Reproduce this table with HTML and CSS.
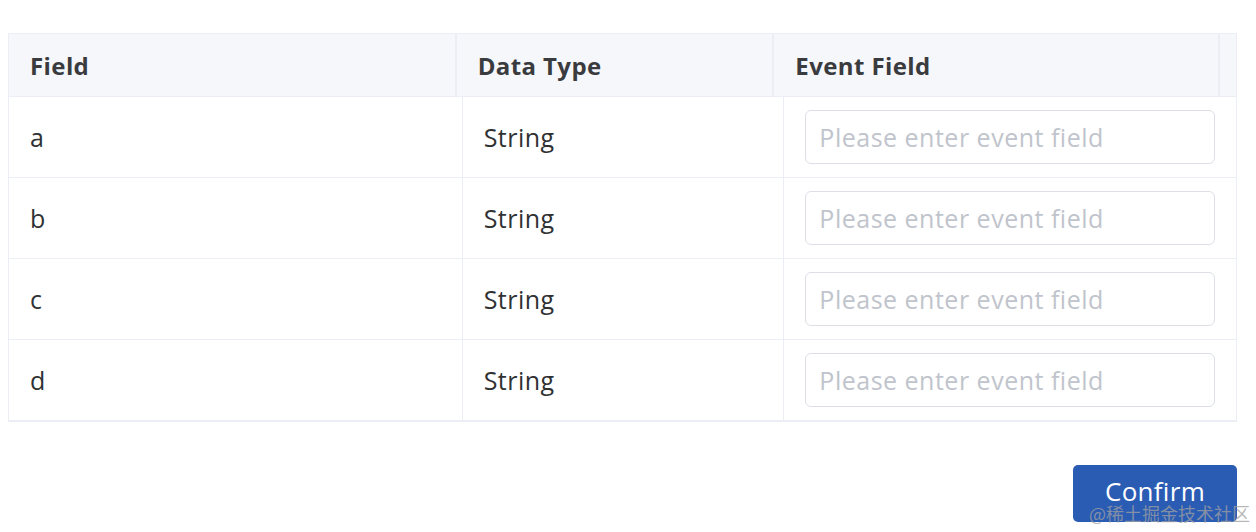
FILE: index.html
```html
<!DOCTYPE html>
<html lang="en">
<head>
<meta charset="utf-8">
<title>Field mapping</title>
<link rel="stylesheet" href="styles.css">
</head>
<body>
<div class="page">
  <div class="table">
    <div class="thead">
      <div class="th">Field</div>
      <div class="th">Data Type</div>
      <div class="th">Event Field</div>
      <div class="th gutter"></div>
    </div>
    <div class="tbody">
      <div class="tr">
        <div class="td">a</div>
        <div class="td">String</div>
        <div class="td"><input class="input" type="text" placeholder="Please enter event field"></div>
      </div>
      <div class="tr">
        <div class="td">b</div>
        <div class="td">String</div>
        <div class="td"><input class="input" type="text" placeholder="Please enter event field"></div>
      </div>
      <div class="tr">
        <div class="td">c</div>
        <div class="td">String</div>
        <div class="td"><input class="input" type="text" placeholder="Please enter event field"></div>
      </div>
      <div class="tr">
        <div class="td">d</div>
        <div class="td">String</div>
        <div class="td"><input class="input" type="text" placeholder="Please enter event field"></div>
      </div>
    </div>
  </div>
  <div class="footer">
    <button class="btn" type="button">Confirm</button>
  </div>
</div>
<div class="watermark">@稀土掘金技术社区</div>
</body>
</html>
```

FILE: styles.css
```css
html, body {
  margin: 0;
  padding: 0;
  background: #ffffff;
}

body {
  font-family: "Open Sans", "Noto Sans CJK SC", sans-serif;
  color: #303133;
  width: 1256px;
  height: 532px;
  overflow: hidden;
  position: relative;
}

.page {
  padding: 33px 19px 0 8px;
}

.table {
  border: 1px solid #ebeef5;
  border-right: none;
}

.thead {
  display: grid;
  grid-template-columns: 448fr 318fr 446fr 17px;
  background: #f5f7fa;
  height: 62px;
  border-bottom: 1px solid #ebeef5;
}

.th {
  display: flex;
  align-items: center;
  padding-left: 21px;
  font-weight: 700;
  font-size: 24px;
  letter-spacing: 0.4px;
  color: #3a3b3e;
  border-right: 2px solid #ebeef5;
}

.th.gutter {
  padding: 0;
  border-right: 1px solid #ebeef5;
}

.tr {
  display: grid;
  grid-template-columns: 454fr 322fr 453fr;
  height: 81px;
  border-bottom: 1px solid #ebeef5;
  box-sizing: border-box;
}

.td {
  display: flex;
  align-items: center;
  padding: 0 21px;
  font-size: 25px;
  letter-spacing: 0.5px;
  color: #303133;
  border-right: 1px solid #ebeef5;
}

.input {
  width: 100%;
  height: 54px;
  box-sizing: border-box;
  border: 1.5px solid #dcdfe6;
  border-radius: 6px;
  padding: 0 13px;
  font-family: inherit;
  font-size: 25px;
  letter-spacing: 0.5px;
  color: #303133;
  outline: none;
  background: #fff;
}

.input::placeholder {
  color: #c0c4cc;
}

.footer {
  display: flex;
  justify-content: flex-end;
  margin-top: 43px;
}

.btn {
  width: 164px;
  height: 57px;
  border: none;
  border-radius: 5px;
  background: #2a5cb4;
  color: #ffffff;
  font-family: inherit;
  font-size: 26px;
  letter-spacing: 0.3px;
  padding: 0 0 6px;
  line-height: 1;
}

.watermark {
  position: absolute;
  right: 6px;
  bottom: 9px;
  font-size: 18px;
  line-height: 20px;
  color: rgba(160, 160, 160, 0.75);
  font-family: "Noto Sans CJK SC", sans-serif;
}
```
